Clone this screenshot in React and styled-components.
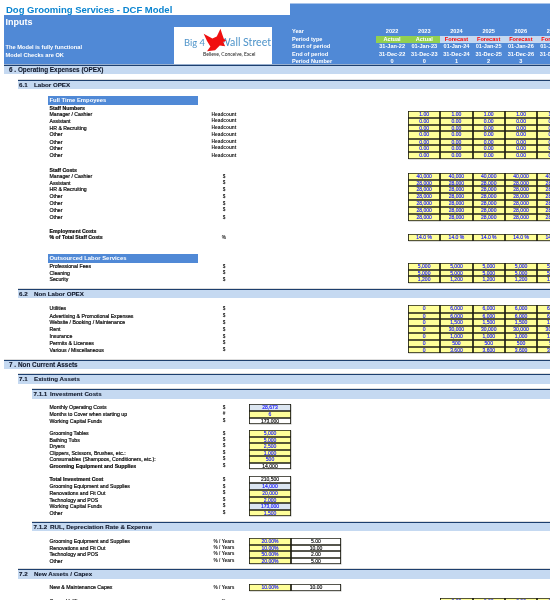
import React from 'react';
import styled, { createGlobalStyle } from 'styled-components';

const GlobalStyle = createGlobalStyle`
    html, body {
        margin: 0;
        background: #ffffff;
        overflow: hidden;
    }
    body {
        font-family: "Liberation Sans", Arial, sans-serif;
    }
`;

const Sheet = styled.div`
    width: 550px;
    height: 600px;
    overflow: hidden;
    filter: blur(0.35px);
`;

const TopRow = styled.div`
    display: flex;
    height: 15px;
`;

const Title = styled.h1`
    width: 290px;
    margin: 0;
    padding: 4px 0 0 6px;
    box-sizing: border-box;
    font-size: 9.5px;
    line-height: 11px;
    font-weight: bold;
    color: #0a84d0;
    white-space: nowrap;
`;

const TopBlue = styled.div`
    flex: 1;
    margin-top: 3px;
    background: #5089d6;
    border-top: 1px solid #a9c4ea;
`;

const Band = styled.div`
    display: grid;
    grid-template-columns: 170px 98px 20px 1fr;
    height: 50px;
    margin-left: 4px;
    background: #5089d6;
    color: #ffffff;
`;

const BandLeft = styled.div`
    display: flex;
    flex-direction: column;
    padding-left: 1.5px;
`;

const BandTitle = styled.div`
    margin-top: 2px;
    font-size: 9px;
    line-height: 11px;
    font-weight: bold;
`;

const StatusBlock = styled.div`
    margin-top: 15px;
    font-size: 5.7px;
    line-height: 8px;
    font-weight: bold;
`;

const Logo = styled.div`
    grid-column: 2;
    display: flex;
    flex-direction: column;
    align-items: flex-start;
    box-sizing: border-box;
    height: 37px;
    margin-top: 12px;
    padding: 10px 1px 0 10px;
    background: #ffffff;
    position: relative;
`;

const LogoLine = styled.div`
    display: flex;
    justify-content: space-between;
    align-items: center;
    width: 87px;
    font-family: Lato, sans-serif;
    font-size: 9.4px;
    line-height: 11px;
    color: #4d93c9;
    white-space: nowrap;
`;

const LogoWall = styled.span`
    font-size: 10.6px;
`;

const LogoTag = styled.div`
    margin: 3px 0 0 19px;
    font-family: Lato, sans-serif;
    font-size: 5px;
    line-height: 7px;
    color: #222222;
    white-space: nowrap;
`;

const Eagle = styled.svg`
    position: absolute;
    left: 29px;
    top: 1px;
    width: 23.5px;
    height: 23.5px;
`;

const Timeline = styled.div`
    grid-column: 4;
    display: flex;
    flex-direction: column;
    justify-content: flex-end;
    margin-bottom: -1px;
`;

const TimeRow = styled.div`
    display: grid;
    grid-template-columns: 84px repeat(6, 32.2px);
    height: 7.6px;
    font-size: 5.6px;
    line-height: 7.6px;
    font-weight: bold;
    white-space: nowrap;
`;

const TimeCell = styled.span`
    text-align: center;
    color: ${(props) => (props.$type === 'Forecast' ? '#ff0000' : '#ffffff')};
    background: ${(props) => {
        if (props.$type === 'Forecast') return '#c5d9f1';
        if (props.$type === 'Actual') return '#92d050';
        return 'transparent';
    }};
`;

const Bar = styled.div`
    box-sizing: border-box;
    display: flex;
    height: ${(props) => props.$h}px;
    margin-left: ${(props) => [4, 18, 32][props.$level]}px;
    padding-left: ${(props) => [5, 1, 1.5][props.$level]}px;
    background: #c5d9f1;
    border-top: 1.6px solid #1d3f6e;
    box-shadow: 0 -0.6px 0 #c9c9c9;
    font-size: ${(props) => (props.$level === 0 ? 6.4 : 6.2)}px;
    line-height: 7px;
    font-weight: bold;
    color: #10182b;
    -webkit-text-stroke: 0.1px #10182b;
    white-space: nowrap;
`;

const BarNumber = styled.span`
    width: ${(props) => (props.$level === 2 ? 16.5 : 15)}px;
`;

const SubHead = styled.div`
    box-sizing: border-box;
    width: 150px;
    height: 8.5px;
    margin-left: 48px;
    padding-left: 1.5px;
    background: #5089d6;
    color: #ffffff;
    font-size: 5.9px;
    line-height: 8.5px;
    font-weight: bold;
`;

const Gap = styled.div`
    height: ${(props) => props.$h}px;
`;

const Row = styled.div`
    display: grid;
    grid-template-columns: 49.5px 155.5px 38px 6px 42px 50px 67px repeat(5, 32.3px);
    height: ${(props) => props.$h}px;
    font-size: 5.2px;
    line-height: ${(props) => props.$h}px;
    white-space: nowrap;
`;

const Label = styled.span`
    grid-column: 2;
    color: #0c0c0c;
    font-weight: ${(props) => (props.$bold ? 'bold' : 'normal')};
    -webkit-text-stroke: 0.2px #0c0c0c;
`;

const Unit = styled.span`
    grid-column: 3;
    text-align: center;
    font-size: 4.8px;
    font-weight: bold;
    color: #111111;
`;

const cellColors = {
    input: '#ffff99',
    link: '#dce6f1',
    calc: '#ffffff',
};

const Cell = styled.span`
    grid-column: ${(props) => props.$col};
    box-sizing: border-box;
    text-align: center;
    font-size: 5.05px;
    background: ${(props) => cellColors[props.$kind]};
    color: ${(props) => (props.$kind === 'calc' ? '#111111' : '#2323ff')};
    -webkit-text-stroke: 0.15px ${(props) => (props.$kind === 'calc' ? '#111111' : '#2323ff')};
    box-shadow: inset 0 0 0 0.85px #1f1f14, 0.5px 0.5px 0 #b5b5b5;
`;

const FIRST_YEAR_COL = 8;

const yearly = (value) => Array(5).fill(value);

const rows = [
    { bar: 0, text: '6 . Operating Expenses (OPEX)', h: 9 },
    { gap: 6 },
    { bar: 1, num: '6.1', text: 'Labor OPEX', h: 9 },
    { gap: 7 },
    { sub: 'Full Time Empoyees' },
    { label: 'Staff Numbers', bold: true, h: 6.5 },
    { label: 'Manager / Cashier', unit: 'Headcount', h: 7, years: yearly('1.00') },
    { label: 'Assistant', unit: 'Headcount', h: 6.5, years: yearly('0.00') },
    { label: 'HR & Recruiting', unit: 'Headcount', h: 6.5, years: yearly('0.00') },
    { label: 'Other', unit: 'Headcount', h: 7.5, years: yearly('0.00') },
    { label: 'Other', unit: 'Headcount', h: 6.5, years: yearly('0.00') },
    { label: 'Other', unit: 'Headcount', h: 6.5, years: yearly('0.00') },
    { label: 'Other', unit: 'Headcount', h: 7.5, years: yearly('0.00') },
    { gap: 7.5 },
    { label: 'Staff Costs', bold: true, h: 6.5 },
    { label: 'Manager / Cashier', unit: '$', h: 7, years: yearly('40,000') },
    { label: 'Assistant', unit: '$', h: 6, years: yearly('28,000') },
    { label: 'HR & Recruiting', unit: '$', h: 7, years: yearly('28,000') },
    { label: 'Other', unit: '$', h: 7, years: yearly('28,000') },
    { label: 'Other', unit: '$', h: 7, years: yearly('28,000') },
    { label: 'Other', unit: '$', h: 6.5, years: yearly('28,000') },
    { label: 'Other', unit: '$', h: 7, years: yearly('28,000') },
    { gap: 7.5 },
    { label: 'Employment Costs', bold: true, h: 6 },
    { label: '% of Total Staff Costs', bold: true, unit: '%', h: 7, years: yearly('14.0 %') },
    { gap: 13 },
    { sub: 'Outsourced Labor Services' },
    { label: 'Professional Fees', unit: '$', h: 7, years: yearly('5,000') },
    { label: 'Cleaning', unit: '$', h: 6.5, years: yearly('5,000') },
    { label: 'Security', unit: '$', h: 7, years: yearly('1,200') },
    { gap: 6 },
    { bar: 1, num: '6.2', text: 'Non Labor OPEX', h: 9 },
    { gap: 7 },
    { label: 'Utilities', unit: '$', h: 7.5, years: ['0', ...yearly('6,000').slice(1)] },
    { label: 'Advertising & Promotional Expenses', unit: '$', h: 6.5, years: ['0', ...yearly('6,000').slice(1)] },
    { label: 'Website / Booking / Maintenance', unit: '$', h: 7, years: ['0', ...yearly('1,500').slice(1)] },
    { label: 'Rent', unit: '$', h: 7, years: ['0', ...yearly('30,000').slice(1)] },
    { label: 'Insurance', unit: '$', h: 7, years: ['0', ...yearly('1,000').slice(1)] },
    { label: 'Permits & Licenses', unit: '$', h: 6.5, years: ['0', ...yearly('500').slice(1)] },
    { label: 'Various / Miscellaneous', unit: '$', h: 6.5, years: ['0', ...yearly('3,600').slice(1)] },
    { gap: 6.5 },
    { bar: 0, text: '7 . Non Current Assets', h: 9.5 },
    { gap: 5 },
    { bar: 1, num: '7.1', text: 'Existing Assets', h: 9.5 },
    { gap: 5.5 },
    { bar: 2, num: '7.1.1', text: 'Investment Costs', h: 9.5 },
    { gap: 5.5 },
    { label: 'Monthly Operating Costs', unit: '$', h: 7, first: ['28,673', 'link'] },
    { label: 'Months to Cover when starting up', unit: '#', h: 6.5, first: ['6', 'input'] },
    { label: 'Working Capital Funds', unit: '$', h: 6.5, first: ['173,000', 'calc'] },
    { gap: 6 },
    { label: 'Grooming Tables', unit: '$', h: 7, first: ['5,000', 'input'] },
    { label: 'Bathing Tubs', unit: '$', h: 6, first: ['5,000', 'input'] },
    { label: 'Dryers', unit: '$', h: 6.5, first: ['2,500', 'input'] },
    { label: 'Clippers, Scissors, Brushes, etc.:', unit: '$', h: 6.5, first: ['1,000', 'input'] },
    { label: 'Consumables (Shampoos, Conditioners, etc.):', unit: '$', h: 6.5, first: ['500', 'input'] },
    { label: 'Grooming Equipment and Supplies', bold: true, unit: '$', h: 6.5, first: ['14,000', 'calc'] },
    { gap: 6.5 },
    { label: 'Total Investment Cost', bold: true, unit: '$', h: 7, first: ['210,500', 'calc'] },
    { label: 'Grooming Equipment and Supplies', unit: '$', h: 7.5, first: ['14,000', 'link'] },
    { label: 'Renovations and Fit Out', unit: '$', h: 6.5, first: ['20,000', 'input'] },
    { label: 'Technology and POS', unit: '$', h: 6.5, first: ['2,000', 'input'] },
    { label: 'Working Capital Funds', unit: '$', h: 6.5, first: ['173,000', 'link'] },
    { label: 'Other', unit: '$', h: 6.5, first: ['1,500', 'input'] },
    { gap: 6 },
    { bar: 2, num: '7.1.2', text: 'RUL, Depreciation Rate & Expense', h: 9 },
    { gap: 6.5 },
    { label: 'Grooming Equipment and Supplies', unit: '% / Years', h: 7, first: ['20.00%', 'input'], second: '5.00' },
    { label: 'Renovations and Fit Out', unit: '% / Years', h: 6.5, first: ['10.00%', 'input'], second: '10.00' },
    { label: 'Technology and POS', unit: '% / Years', h: 6.5, first: ['50.00%', 'input'], second: '2.00' },
    { label: 'Other', unit: '% / Years', h: 6.5, first: ['20.00%', 'input'], second: '5.00' },
    { gap: 5 },
    { bar: 1, num: '7.2', text: 'New Assets / Capex', h: 10 },
    { gap: 5 },
    { label: 'New & Maintenance Capex', unit: '% / Years', h: 7, first: ['10.00%', 'input'], second: '10.00' },
    { gap: 6.5 },
    { label: 'Capex Uplift', unit: '%', h: 7, years: [null, ...yearly('0.00').slice(1)] },
];

const periods = [
    { label: 'Year', cells: ['2022', '2023', '2024', '2025', '2026', '2027'] },
    { label: 'Period type', cells: ['Actual', 'Actual', 'Forecast', 'Forecast', 'Forecast', 'Forecast'], typed: true },
    { label: 'Start of period', cells: ['31-Jan-22', '01-Jan-23', '01-Jan-24', '01-Jan-25', '01-Jan-26', '01-Jan-27'] },
    { label: 'End of period', cells: ['31-Dec-22', '31-Dec-23', '31-Dec-24', '31-Dec-25', '31-Dec-26', '31-Dec-27'] },
    { label: 'Period Number', cells: ['0', '0', '1', '2', '3', '4'] },
];

const SheetRow = ({ row }) => {
    if (row.gap) return <Gap $h={row.gap} />;
    if (row.sub) return <SubHead>{row.sub}</SubHead>;
    if (row.bar !== undefined) {
        return (
            <Bar $level={row.bar} $h={row.h}>
                {row.num && <BarNumber $level={row.bar}>{row.num}</BarNumber>}
                {row.text}
            </Bar>
        );
    }
    return (
        <Row $h={row.h}>
            <Label $bold={row.bold}>{row.label}</Label>
            {row.unit && <Unit>{row.unit}</Unit>}
            {row.first && <Cell $col={5} $kind={row.first[1]}>{row.first[0]}</Cell>}
            {row.second && <Cell $col={6} $kind="calc">{row.second}</Cell>}
            {row.years && row.years.map((value, index) => value && (
                <Cell key={index} $col={FIRST_YEAR_COL + index} $kind="input">{value}</Cell>
            ))}
        </Row>
    );
};

const App = () => (
    <>
        <GlobalStyle />
        <Sheet>
            <TopRow>
                <Title>Dog Grooming Services - DCF Model</Title>
                <TopBlue />
            </TopRow>
            <Band>
                <BandLeft>
                    <BandTitle>Inputs</BandTitle>
                    <StatusBlock>
                        <div>The Model is fully functional</div>
                        <div>Model Checks are OK</div>
                    </StatusBlock>
                </BandLeft>
                <Logo>
                    <LogoLine>
                        <span>Big 4</span>
                        <LogoWall>Wall Street</LogoWall>
                    </LogoLine>
                    <LogoTag>Believe, Conceive, Excel</LogoTag>
                    <Eagle viewBox="98 18 70 70">
                        <path
                            fill="#f01010"
                            d="M100 35 L126 49 L139 43 L150 20 L155 36 L160 50 L167 56 L158 60 L164 72 L148 70 L134 84 L110 87 L120 73 L110 57 Z"
                        />
                    </Eagle>
                </Logo>
                <Timeline>
                    {periods.map((period) => (
                        <TimeRow key={period.label}>
                            <span>{period.label}</span>
                            {period.cells.map((cell, index) => (
                                <TimeCell key={index} $type={period.typed ? cell : undefined}>{cell}</TimeCell>
                            ))}
                        </TimeRow>
                    ))}
                </Timeline>
            </Band>
            {rows.map((row, index) => (
                <SheetRow key={index} row={row} />
            ))}
        </Sheet>
    </>
);

export default App;
